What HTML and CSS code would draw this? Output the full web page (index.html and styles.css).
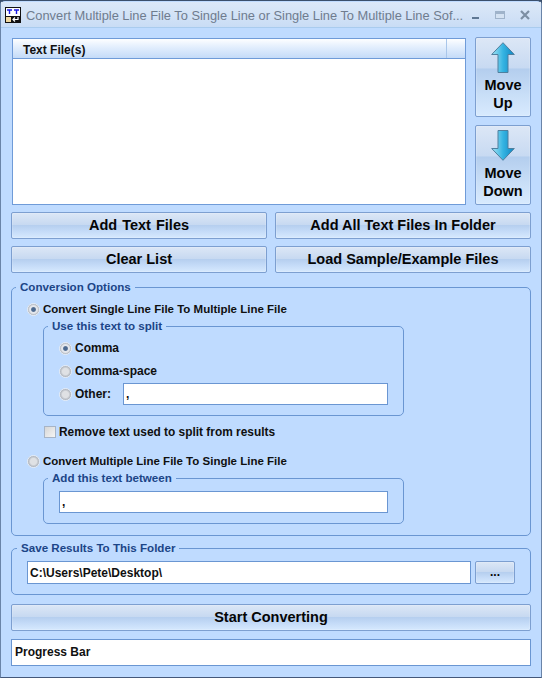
FILE: index.html
```html
<!DOCTYPE html>
<html lang="en">
  <head>
    <meta charset="UTF-8" />
    <meta name="viewport" content="width=device-width, initial-scale=1.0" />
    <title>Convert Multiple Line File To Single Line</title>
    <link rel="stylesheet" href="styles.css">
  </head>
  <body>
    <div class="window">
      <div class="titleBar">
        <svg class="appIcon" width="16" height="16" viewBox="0 0 16 16">
          <rect x="0.5" y="0.5" width="15" height="15" fill="#fff" stroke="#111" />
          <path d="M2 3h5M4.500 3v4M9 3h5M11.500 3v4" stroke="#1a1ae0" stroke-width="1.400" fill="none" />
          <rect x="1" y="9" width="14" height="6" fill="#111" />
          <rect x="1" y="10" width="5" height="5" fill="#f0d8a0" />
          <path d="M13 10v2.500H8M10 10.500l-2 2 2 2" stroke="#fff" stroke-width="1.200" fill="none" />
        </svg>
        <span class="titleText">Convert Multiple Line File To Single Line or Single Line To Multiple Line Sof...</span>
        <div class="winBtns">
          <svg width="9" height="10" viewBox="0 0 9 10"><rect x="1" y="7" width="7" height="2" fill="#5f7894" /></svg>
          <svg width="10" height="8" viewBox="0 0 10 8"><rect x="0.500" y="0.500" width="9" height="7" fill="#d4e2f2" stroke="#9fb3ca" /><rect x="1" y="1" width="8" height="2" fill="#9fb3ca" /></svg>
          <svg width="10" height="10" viewBox="0 0 10 10"><path d="M1 1l8 8M9 1l-8 8" stroke="#7d8fa3" stroke-width="2.200" fill="none" /></svg>
        </div>
      </div>

      <div class="content">
        <div class="listRow">
          <div class="listBox">
            <div class="listHeader"><span class="listHeaderCell">Text File(s)</span></div>
          </div>
          <div class="moveBtns">
            <button class="btn moveBtn">
              <svg width="24" height="31" viewBox="0 0 24 31">
                <defs>
                  <linearGradient id="arrowFill" x1="0" x2="1" y1="0" y2="0">
                    <stop offset="0" stop-color="#a6e3f4" />
                    <stop offset="0.5" stop-color="#35b4e2" />
                    <stop offset="1" stop-color="#0f86c4" />
                  </linearGradient>
                </defs>
                <path d="M12 0.700L23.300 12.500H17V30.500H7V12.500H0.700Z" fill="url(#arrowFill)" stroke="#4f7f9e" />
              </svg>
              <span>Move<br />Up</span>
            </button>
            <button class="btn moveBtn">
              <svg width="24" height="31" viewBox="0 0 24 31">
                <path d="M7 0.500H17V18.500H23.300L12 30.300L0.700 18.500H7Z" fill="url(#arrowFill)" stroke="#4f7f9e" />
              </svg>
              <span>Move<br />Down</span>
            </button>
          </div>
        </div>

        <div class="btnGrid">
          <button class="btn"><span class="wide">Add Text Files</span></button>
          <button class="btn">Add All Text Files In Folder</button>
          <button class="btn">Clear List</button>
          <button class="btn">Load Sample/Example Files</button>
        </div>

        <fieldset class="group optionsGroup">
          <legend>Conversion Options</legend>
          <label class="option mainOption topOption"><span class="radio checked"></span>Convert Single Line File To Multiple Line File</label>

          <fieldset class="group splitGroup">
            <legend>Use this text to split</legend>
            <label class="option commaOption"><span class="radio checked"></span>Comma</label>
            <label class="option spaceOption"><span class="radio"></span>Comma-space</label>
            <div class="otherRow">
              <label class="option otherLabel"><span class="radio"></span>Other:</label>
              <input class="textInput otherInput" type="text" value="," />
            </div>
          </fieldset>

          <label class="option checkOption"><span class="checkbox"></span>Remove text used to split from results</label>
          <label class="option mainOption bottomOption"><span class="radio"></span>Convert Multiple Line File To Single Line File</label>

          <fieldset class="group betweenGroup">
            <legend>Add this text between</legend>
            <input class="textInput" type="text" value="," />
          </fieldset>
        </fieldset>

        <fieldset class="group saveGroup">
          <legend>Save Results To This Folder</legend>
          <div class="saveRow">
            <input class="textInput" type="text" value="C:\Users\Pete\Desktop\" />
            <button class="btn browseBtn">...</button>
          </div>
        </fieldset>

        <button class="btn startBtn">Start Converting</button>
        <div class="progressBar">Progress Bar</div>
      </div>
    </div>
  </body>
</html>
```

FILE: styles.css
```css
* {
  box-sizing: border-box;
}

html,
body {
  margin: 0;
  height: 100%;
}

body {
  font-family: "Liberation Sans", Arial, sans-serif;
  font-size: 12px;
  font-weight: bold;
  color: #101010;
  background: #3a4f6c;
}

.window {
  width: 542px;
  height: 678px;
  padding: 1px 3px 3px 3px;
  background: #bfdbff;
  border-left: 1px solid #6a84a8;
  border-right: 1px solid #6a84a8;
  border-bottom: 1px solid #44587a;
  border-radius: 5px 5px 0 0;
  border-top: 1px solid #3a4f6c;
}

.titleBar {
  display: flex;
  align-items: center;
  height: 26px;
  margin: 0 -3px;
  padding: 0 11px 0 4px;
  background: linear-gradient(#dbe8f8, #d2e2f6 55%, #c9dcf5);
  border-bottom: 1px solid #a9cbee;
}

.appIcon {
  flex: none;
}

.titleText {
  margin: 2px 0 0 5px;
  font-size: 12.850px;
  font-weight: normal;
  color: #6f7c8e;
  white-space: nowrap;
}

.winBtns {
  display: flex;
  align-items: center;
  gap: 15px;
  margin-left: auto;
}

.content {
  padding: 9px 7px 0 7px;
}

.listRow {
  display: flex;
  gap: 9px;
}

.listBox {
  width: 455px;
  height: 167px;
  margin: 1px 0 0 1px;
  border: 1px solid #6f9bd8;
  background: #fff;
}

.listHeader {
  height: 20px;
  background: linear-gradient(#fdfeff, #e4effd 40%, #c4dbf8);
  border-bottom: 1px solid #6f9bd8;
}

.listHeaderCell {
  display: block;
  width: 434px;
  height: 19px;
  padding: 4px 0 0 10px;
  border-right: 1px solid #a9c6ea;
}

.moveBtns {
  display: flex;
  flex-direction: column;
  gap: 8px;
}

.btn {
  font-family: inherit;
  font-weight: bold;
  font-size: 14.500px;
  color: #050505;
  padding: 0 0 2px 0;
  border: 1px solid #7d9fd0;
  border-radius: 2px;
  background: linear-gradient(#dce7f6, #c7d9f1 47%, #b6cfef 50%, #c6dcf8 75%, #d6e9fe);
  box-shadow: inset 0 0 0 1px rgba(255, 255, 255, 0.15);
}

.wide {
  word-spacing: 1px;
}

.moveBtn {
  display: flex;
  flex-direction: column;
  align-items: center;
  width: 56px;
  height: 80px;
  padding: 4px 0 0 0;
  line-height: 18px;
  background: linear-gradient(#dce7f6, #c8daf2 38%, #b4ceee 40%, #c8def7 72%, #d8eafe);
}

.moveBtn svg {
  flex: none;
  margin-bottom: 3px;
}

.btnGrid {
  display: grid;
  grid-template-columns: 256px 256px;
  gap: 7px 8px;
  margin-top: 7px;
}

.btnGrid .btn {
  height: 27px;
}

.group {
  margin: 0;
  min-width: 0;
  border: 1px solid #6a96d2;
  border-radius: 5px;
}

.group legend {
  margin-left: -11px;
  padding: 0 4px;
  font-size: 11.600px;
  line-height: 14px;
  color: #1c4587;
}

.optionsGroup {
  height: 256px;
  margin-top: 7px;
  padding: 8px 0 0 15px;
}

.option {
  display: flex;
  align-items: center;
  height: 14px;
}

.mainOption {
  font-size: 11.500px;
}

.radio {
  flex: none;
  width: 13px;
  height: 13px;
  margin-right: 3px;
  border-radius: 50%;
  border: 1px solid #e6ecf4;
  background: radial-gradient(circle, #dfe1e4 40%, #a9afb8 72%, #c8ccd2 100%);
}

.radio.checked {
  background: radial-gradient(circle, #4d6a90 24%, #e4e7ec 38%, #e4e7ec 50%, #a9afb8 72%, #c8ccd2 100%);
}

.checkbox {
  flex: none;
  width: 12px;
  height: 12px;
  margin: 0 3px 0 0;
  border: 1px solid #a7b4c6;
  background: linear-gradient(135deg, #d6d6d6, #f5f5f5);
}

.splitGroup {
  width: 361px;
  height: 97px;
  margin: 3px 0 0 16px;
  padding: 8px 0 0 15px;
}

.spaceOption {
  margin-top: 9px;
}

.otherRow {
  display: flex;
  align-items: center;
  margin-top: 5px;
}

.otherLabel {
  width: 64px;
  flex: none;
}

.textInput {
  height: 22px;
  padding: 0 0 0 2px;
  border: 1px solid #6a96d2;
  font-family: inherit;
  font-size: 12px;
  font-weight: bold;
  color: #101010;
  background: #fff;
  border-radius: 0;
  outline: none;
}

.otherInput {
  width: 265px;
}

.checkOption {
  margin: 9px 0 0 17px;
  font-size: 11.900px;
}

.bottomOption {
  margin-top: 15px;
}

.betweenGroup {
  width: 361px;
  height: 53px;
  margin: 3px 0 0 16px;
  padding: 6px 0 0 15px;
}

.betweenGroup .textInput {
  width: 329px;
}

.saveGroup {
  height: 54px;
  margin-top: 5px;
  padding: 6px 0 0 15px;
}

.saveGroup > legend {
  margin-left: -10px;
}

.saveRow {
  display: flex;
  gap: 4px;
}

.saveRow .textInput {
  width: 444px;
  height: 23px;
}

.browseBtn {
  width: 40px;
  height: 23px;
  font-size: 12px;
}

.startBtn {
  display: block;
  width: 520px;
  height: 27px;
  margin-top: 9px;
}

.progressBar {
  width: 520px;
  height: 27px;
  margin-top: 8px;
  padding-left: 3px;
  line-height: 25px;
  border: 1px solid #6a96d2;
  background: #fff;
}
```
